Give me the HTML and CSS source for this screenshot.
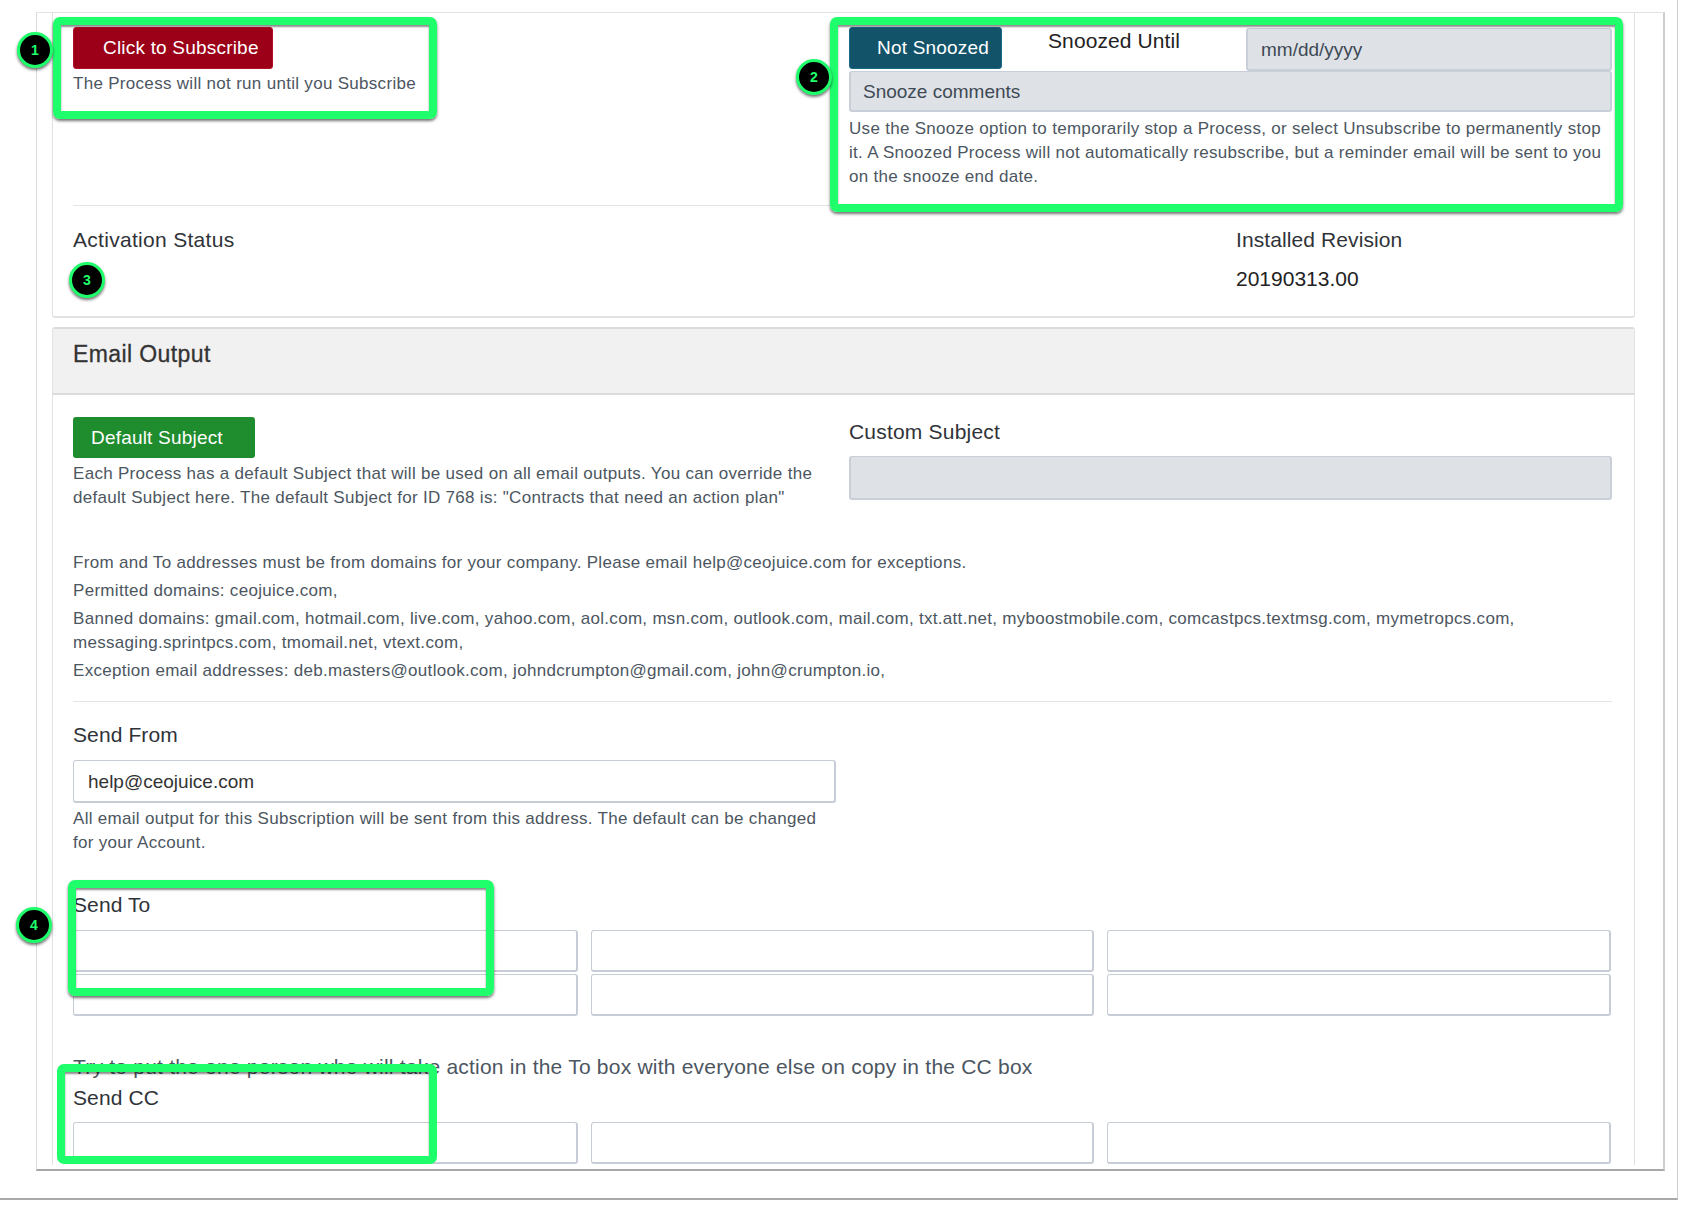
FILE: index.html
```html
<!DOCTYPE html>
<html lang="en">
<head>
<meta charset="utf-8">
<title>Process subscription</title>
<link rel="stylesheet" href="styles.css">
</head>
<body>
<div class="window">
  <div class="frame">
    <section class="card card-top">
      <div class="two-col">
        <div>
          <button class="btn btn-red" type="button">Click to Subscribe</button>
          <p class="help help-sub">The Process will not run until you Subscribe</p>
        </div>
        <div>
          <div class="snooze-row">
            <button class="btn btn-teal" type="button">Not Snoozed</button>
            <span class="snooze-label">Snoozed Until</span>
            <div class="field field-gray field-date">mm/dd/yyyy</div>
          </div>
          <div class="field field-gray field-comment">Snooze comments</div>
          <p class="help help-snooze">Use the Snooze option to temporarily stop a Process, or select Unsubscribe to permanently stop it. A Snoozed Process will not automatically resubscribe, but a reminder email will be sent to you on the snooze end date.</p>
        </div>
      </div>
      <hr class="rule rule-top">
      <div class="status-row">
        <div class="label label-activation">Activation Status</div>
        <div class="revision">
          <div class="label">Installed Revision</div>
          <div class="revision-value">20190313.00</div>
        </div>
      </div>
    </section>

    <section class="card card-email">
      <header class="card-header">Email Output</header>
      <div class="card-body">
        <div class="two-col">
          <div>
            <button class="btn btn-green" type="button">Default Subject</button>
            <p class="help help-subject">Each Process has a default Subject that will be used on all email outputs. You can override the default Subject here. The default Subject for ID 768 is: "Contracts that need an action plan"</p>
          </div>
          <div>
            <div class="label label-custom">Custom Subject</div>
            <div class="field field-gray field-custom"></div>
          </div>
        </div>

        <div class="domains">
          <p class="help">From and To addresses must be from domains for your company. Please email help@ceojuice.com for exceptions.</p>
          <p class="help">Permitted domains: ceojuice.com,</p>
          <p class="help">Banned domains: gmail.com, hotmail.com, live.com, yahoo.com, aol.com, msn.com, outlook.com, mail.com, txt.att.net, myboostmobile.com, comcastpcs.textmsg.com, mymetropcs.com, messaging.sprintpcs.com, tmomail.net, vtext.com,</p>
          <p class="help">Exception email addresses: deb.masters@outlook.com, johndcrumpton@gmail.com, john@crumpton.io,</p>
        </div>
        <hr class="rule rule-domains">

        <div class="send-from">
          <div class="label">Send From</div>
          <div class="field field-from">help@ceojuice.com</div>
          <p class="help help-from">All email output for this Subscription will be sent from this address. The default can be changed for your Account.</p>
        </div>

        <div class="label label-to">Send To</div>
        <div class="address-grid">
          <div class="field field-address"></div>
          <div class="field field-address"></div>
          <div class="field field-address"></div>
          <div class="field field-address"></div>
          <div class="field field-address"></div>
          <div class="field field-address"></div>
        </div>

        <p class="try-note">Try to put the one person who will take action in the To box with everyone else on copy in the CC box</p>
        <div class="label label-cc">Send CC</div>
        <div class="address-grid address-grid-cc">
          <div class="field field-address"></div>
          <div class="field field-address"></div>
          <div class="field field-address"></div>
        </div>
      </div>
    </section>
  </div>

  <div class="mark mark-1"></div>
  <div class="mark mark-2"></div>
  <div class="mark mark-4"></div>
  <div class="mark mark-5"></div>
  <div class="badge badge-1">1</div>
  <div class="badge badge-2">2</div>
  <div class="badge badge-3">3</div>
  <div class="badge badge-4">4</div>
</div>
</body>
</html>
```

FILE: styles.css
```css
* { box-sizing: border-box; }
html, body { margin: 0; padding: 0; background: #fff; }
body {
  width: 1694px;
  height: 1214px;
  overflow: hidden;
  font-family: "Liberation Sans", Arial, sans-serif;
  color: #2d3b45;
}
p { margin: 0; }

.window {
  position: relative;
  width: 1678px;
  height: 1200px;
  padding: 12px 0 0 36px;
  border-right: 1px solid #cfcfcf;
  border-bottom: 2px solid #a9a9a9;
}
.frame {
  width: 1629px;
  height: 1159px;
  padding: 0 29px 5px 15px;
  border-left: 1px solid #d9d9d9;
  border-top: 1px solid #e2e2e2;
  border-right: 2px solid #cdcdcd;
  border-bottom: 2px solid #a8a8a8;
  overflow: hidden;
}
.frame > .card { width: 1583px; }

.card {
  border: 1px solid #e2e2e2;
  border-top: 0;
  border-radius: 0 0 3px 3px;
}
.card-top {
  height: 305px;
  padding: 14px 22px 0 20px;
  border-bottom-width: 2px;
}
.card-email {
  height: 838px;
  margin-top: 9px;
  border-top: 2px solid #dcdcdc;
  border-radius: 3px 3px 0 0;
  border-bottom: 0;
  overflow: hidden;
}
.card-header {
  height: 66px;
  padding: 9px 20px 0;
  background: #f1f1f1;
  border-bottom: 2px solid #dcdcdc;
  font-size: 23px;
  line-height: 32px;
  font-weight: 400;
  letter-spacing: 0.4px;
  color: #333;
  -webkit-text-stroke: 0.3px #333;
}
.card-body { padding: 21px 22px 0 20px; }

.two-col {
  display: grid;
  grid-template-columns: 763px 763px;
  column-gap: 13px;
}

.btn {
  display: block;
  border: 1px solid transparent;
  border-radius: 3px;
  color: #fff;
  font-family: inherit;
  font-size: 19px;
  line-height: 24px;
  letter-spacing: 0.2px;
  padding: 0;
  text-align: left;
}
.btn-red {
  width: 200px;
  height: 42px;
  padding-left: 29px;
  background: #9c0018;
  border-color: #b0102a;
}
.btn-teal {
  flex: none;
  width: 153px;
  height: 42px;
  background: #12536a;
  border-color: #1a6a85;
  padding-left: 27px;
}
.btn-green {
  width: 182px;
  height: 41px;
  margin-top: 1px;
  padding-left: 17px;
  background: #1f8c2e;
}

.help {
  font-size: 17px;
  line-height: 24px;
  color: #4c5661;
  letter-spacing: 0.3px;
}
.help-sub { margin-top: 3px; }
.help-snooze { margin-top: 5px; }
.help-subject { margin-top: 4px; }
.help-from { margin-top: 4px; }

.snooze-row {
  display: flex;
  height: 44px;
}
.snooze-label {
  flex: 1;
  padding-left: 46px;
  font-size: 21px;
  line-height: 28px;
  letter-spacing: 0.1px;
  color: #222;
}
.field {
  border: 1px solid #c7cdd6;
  border-radius: 3px;
  font-size: 19px;
  color: #333;
}
.field-gray {
  background: #dee1e6;
  border: 2px solid #c9cfd8;
  border-top-width: 1px;
  color: #3f4a55;
}
.field-date {
  flex: none;
  width: 366px;
  height: 43px;
  margin-top: 1px;
  padding: 0 13px;
  line-height: 41px;
}
.field-comment {
  height: 41px;
  padding: 0 12px;
  line-height: 39px;
}
.field-custom { height: 44px; margin-top: 10px; }
.field-from {
  height: 43px;
  margin-top: 11px;
  padding: 0 14px;
  line-height: 41px;
  border-width: 1px 2px 2px 1px;
}
.field-address {
  height: 42px;
  border-width: 1px 2px 2px 1px;
}

.rule {
  height: 1px;
  margin: 0;
  border: 0;
  background: #e4e4e4;
}
.rule-top { margin-top: 16px; }
.rule-domains { margin-top: 18px; }

.label {
  font-size: 21px;
  line-height: 28px;
  letter-spacing: 0.1px;
  color: #2f3338;
}
.label-activation { letter-spacing: 0.3px; }
.label-custom { margin-top: 2px; letter-spacing: 0.2px; }
.label-to { margin-top: 36px; }
.label-cc { margin-top: 3px; }

.status-row {
  display: flex;
  justify-content: space-between;
  margin-top: 20px;
}
.revision { width: 376px; }
.revision-value {
  margin-top: 11px;
  font-size: 21px;
  line-height: 28px;
  color: #222;
}

.domains { margin-top: 41px; }
.domains .help { margin-bottom: 4px; }
.domains .help:last-child { margin-bottom: 0; }

.send-from { width: 763px; margin-top: 19px; }

.address-grid {
  display: grid;
  grid-template-columns: 505px 503px 504px;
  column-gap: 13px;
  row-gap: 2px;
  margin-top: 11px;
}
.address-grid-cc { margin-top: 10px; }

.try-note {
  margin-top: 37px;
  font-size: 21px;
  line-height: 28px;
  letter-spacing: 0.22px;
  color: #4c5661;
}

.mark {
  position: absolute;
  border: 8px solid #1eff6b;
  border-radius: 7px;
  box-shadow: 0 2px 3px rgba(0, 0, 0, .55), inset 0 2px 2px rgba(0, 0, 0, .45);
}
.mark-1 { left: 53px; top: 17px; width: 384px; height: 102px; }
.mark-2 { left: 830px; top: 17px; width: 793px; height: 195px; }
.mark-4 { left: 68px; top: 880px; width: 426px; height: 116px; }
.mark-5 { left: 57px; top: 1064px; width: 380px; height: 100px; box-shadow: inset 0 2px 2px rgba(0, 0, 0, .45); }

.badge {
  position: absolute;
  width: 36px;
  height: 36px;
  border: 3px solid #1eff6b;
  border-radius: 50%;
  background: #000;
  color: #1eff6b;
  font-size: 14px;
  font-weight: 700;
  line-height: 30px;
  text-align: center;
  box-shadow: 0 2px 3px rgba(0, 0, 0, .55);
}
.badge-1 { left: 17px; top: 32px; }
.badge-2 { left: 796px; top: 59px; }
.badge-3 { left: 69px; top: 262px; }
.badge-4 { left: 16px; top: 907px; }
```
